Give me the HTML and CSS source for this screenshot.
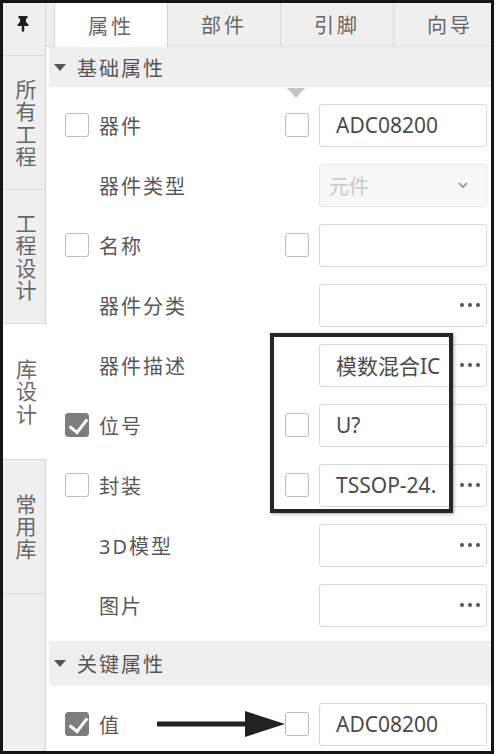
FILE: index.html
```html
<!DOCTYPE html>
<html lang="zh-CN">
<head>
    <meta charset="UTF-8">
    <title>属性</title>
    <link rel="stylesheet" href="styles.css">
</head>
<body>
    <div class="panel">
        <div class="sidebar">
            <div class="pin">
                <svg width="12" height="17" viewBox="0 0 12 17"><path d="M1.5 1h9v2.5H9v3.5l2.5 2.5v1.5H7.2v5L6 17l-1.2-1v-5H0.5V9.5L3 7V3.5H1.5z" fill="#1e1e1e"/></svg>
            </div>
            <div class="vtab"><span>所有工程</span></div>
            <div class="vtab"><span>工程设计</span></div>
            <div class="vtab active"><span>库设计</span></div>
            <div class="vtab"><span>常用库</span></div>
        </div>

        <div class="main">
            <div class="tabs">
                <div class="tab active">属性</div>
                <div class="tab">部件</div>
                <div class="tab">引脚</div>
                <div class="tab">向导</div>
            </div>

            <div class="group-head"><span class="caret"></span>基础属性</div>
            <div class="rows">
                <div class="row">
                    <span class="check"></span>
                    <span class="label">器件</span>
                    <span class="check"></span>
                    <div class="field"><span class="value">ADC08200</span></div>
                </div>
                <div class="row">
                    <span class="label sub">器件类型</span>
                    <div class="field select"><span class="value">元件</span>
                        <svg class="chevron" width="10" height="6" viewBox="0 0 10 6"><path d="M1 1l4 4 4-4" fill="none" stroke="#8a8a8a" stroke-width="1.6"/></svg>
                    </div>
                </div>
                <div class="row">
                    <span class="check"></span>
                    <span class="label">名称</span>
                    <span class="check"></span>
                    <div class="field"></div>
                </div>
                <div class="row">
                    <span class="label sub">器件分类</span>
                    <div class="field"><span class="value"></span><span class="dots"><i></i><i></i><i></i></span></div>
                </div>
                <div class="row">
                    <span class="label sub">器件描述</span>
                    <div class="field"><span class="value">模数混合IC</span><span class="dots"><i></i><i></i><i></i></span></div>
                </div>
                <div class="row">
                    <span class="check on"></span>
                    <span class="label">位号</span>
                    <span class="check"></span>
                    <div class="field"><span class="value">U?</span></div>
                </div>
                <div class="row">
                    <span class="check"></span>
                    <span class="label">封装</span>
                    <span class="check"></span>
                    <div class="field"><span class="value">TSSOP-24.</span><span class="dots"><i></i><i></i><i></i></span></div>
                </div>
                <div class="row">
                    <span class="label sub">3D模型</span>
                    <div class="field"><span class="value"></span><span class="dots"><i></i><i></i><i></i></span></div>
                </div>
                <div class="row">
                    <span class="label sub">图片</span>
                    <div class="field"><span class="value"></span><span class="dots"><i></i><i></i><i></i></span></div>
                </div>
            </div>

            <div class="group-head second"><span class="caret"></span>关键属性</div>
            <div class="rows">
                <div class="row">
                    <span class="check on"></span>
                    <span class="label">值</span>
                    <span class="check"></span>
                    <div class="field"><span class="value">ADC08200</span></div>
                </div>
            </div>
        </div>

        <!-- 分隔标记和标注 -->
        <span class="split-mark"></span>
        <div class="callout"></div>
        <svg class="arrow" width="130" height="32" viewBox="0 0 130 32">
            <path d="M1 16H96" stroke="#222" stroke-width="5" stroke-linecap="round"/>
            <path d="M88 3L128 16L88 29z" fill="#222"/>
        </svg>
    </div>
</body>
</html>
```

FILE: styles.css
```css
:root {
    --line: #d9d9d9;
    --grey-bg: #efefef;
    --text: #585858;
}

* {
    margin: 0;
    padding: 0;
    box-sizing: border-box;
}

body {
    background: #fff;
    font-family: "Noto Sans", "Noto Sans CJK SC", sans-serif;
    color: var(--text);
}

.panel {
    position: relative;
    display: flex;
    width: 494px;
    height: 754px;
    border: 3px solid #151515;
    overflow: hidden;
    background: #fff;
}

/* 左侧竖排标签 */
.sidebar {
    width: 43px;
    flex-shrink: 0;
    background: var(--grey-bg);
    border-right: 1px solid #d4d4d4;
}

.pin {
    height: 53px;
    border-bottom: 1px solid #dadada;
    display: flex;
    justify-content: center;
    padding-top: 12px;
    padding-right: 2px;
}

.vtab {
    height: 134px;
    border-bottom: 1px solid #dadada;
    display: flex;
    align-items: center;
    justify-content: center;
    padding-left: 4px;
    color: #666;
}

.vtab span {
    width: 22px;
    font-size: 21px;
    line-height: 22.5px;
    text-align: center;
    word-break: break-all;
}

.vtab.active {
    height: 136px;
    background: #fff;
    margin-right: -1px;
    color: #6a6a6a;
}

.main {
    flex: 1;
    min-width: 0;
    display: flex;
    flex-direction: column;
}

/* 顶部标签 */
.tabs {
    display: flex;
    height: 44px;
    flex-shrink: 0;
    background: var(--grey-bg);
    padding-left: 8px;
    border-bottom: 1px solid #dcdcdc;
}

.tab {
    width: 113px;
    flex-shrink: 0;
    display: flex;
    align-items: center;
    justify-content: center;
    font-size: 20px;
    letter-spacing: 3px;
    color: #666;
    border-left: 1px solid #d6d6d6;
}

.tab.active {
    background: #fff;
    margin-bottom: -1px;
}

.group-head {
    display: flex;
    align-items: center;
    height: 40px;
    margin-left: 3px;
    background: var(--grey-bg);
    font-size: 20px;
    letter-spacing: 2px;
    color: #555;
    flex-shrink: 0;
}

.group-head.second {
    height: 45px;
    margin-top: 6px;
}

.caret {
    width: 0;
    height: 0;
    margin: 0 11px 0 5px;
    border-left: 6px solid transparent;
    border-right: 6px solid transparent;
    border-top: 7px solid #555;
}

.rows {
    padding: 8px 4px 0 19px;
    flex-shrink: 0;
}

.row {
    display: grid;
    grid-template-columns: 34px 1fr 34px 168px;
    align-items: center;
    height: 60px;
}

.label {
    grid-column: 2;
    font-size: 20px;
    letter-spacing: 2px;
    color: #575757;
}

.check {
    width: 24px;
    height: 24px;
    border: 1px solid #bdbdbd;
    border-radius: 3px;
    background: #fff;
    position: relative;
}

.check.on {
    background: #7d7d7d;
    border-color: #7d7d7d;
}

.check.on::after {
    content: '';
    position: absolute;
    left: 7px;
    top: 1px;
    width: 8px;
    height: 15px;
    border-right: 3.5px solid #fff;
    border-bottom: 3.5px solid #fff;
    transform: rotate(38deg);
}

.field {
    grid-column: 4;
    height: 43px;
    border: 1px solid var(--line);
    border-radius: 3px;
    display: flex;
    align-items: center;
    background: #fff;
}

.value {
    flex: 1;
    min-width: 0;
    overflow: hidden;
    white-space: nowrap;
    padding-left: 16px;
    font-size: 21px;
    color: #4a4a4a;
}

.dots {
    width: 34px;
    flex-shrink: 0;
    display: flex;
    gap: 4px;
    padding-left: 8px;
}

.dots i {
    width: 4px;
    height: 4px;
    border-radius: 50%;
    background: #555;
}

.select {
    background: #f7f7f7;
    border-color: #e6e6e6;
}

.select .value {
    padding-left: 9px;
    font-size: 20px;
    color: #c9c9c9;
}

.chevron {
    margin-right: 18px;
}

.split-mark {
    position: absolute;
    left: 284px;
    top: 85px;
    width: 0;
    height: 0;
    border-left: 9px solid transparent;
    border-right: 9px solid transparent;
    border-top: 10px solid #c6c6c6;
}

.callout {
    position: absolute;
    left: 267px;
    top: 330px;
    width: 183px;
    height: 180px;
    border: 4px solid #262626;
    box-shadow: 1px 1px 3px rgba(0,0,0,0.35);
}

.arrow {
    position: absolute;
    left: 154px;
    top: 705px;
}
```
